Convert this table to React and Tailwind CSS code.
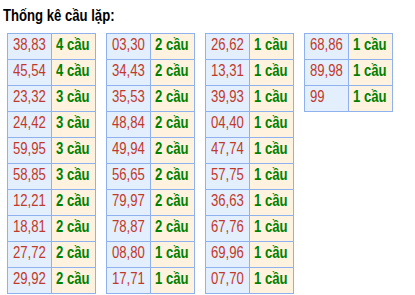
import React from "react";

const columns = [
	[["38,83", 4], ["45,54", 4], ["23,32", 3], ["24,42", 3], ["59,95", 3], ["58,85", 3], ["12,21", 2], ["18,81", 2], ["27,72", 2], ["29,92", 2]],
	[["03,30", 2], ["34,43", 2], ["35,53", 2], ["48,84", 2], ["49,94", 2], ["56,65", 2], ["79,97", 2], ["78,87", 2], ["08,80", 1], ["17,71", 1]],
	[["26,62", 1], ["13,31", 1], ["39,93", 1], ["04,40", 1], ["47,74", 1], ["57,75", 1], ["36,63", 1], ["67,76", 1], ["69,96", 1], ["07,70", 1]],
	[["68,86", 1], ["89,98", 1], ["99", 1]],
];

// chữ hẹp kiểu Arial Narrow: Liberation Sans bóp ngang
const narrow = "inline-block origin-left scale-x-[0.82] whitespace-nowrap";

function App() {
	return (
		<div className="w-[415px] h-[295px] bg-white overflow-hidden font-['Liberation_Sans',Arial,sans-serif] text-[16px]">
			<div className="pl-[3px] pt-[7px] h-[33px] font-bold text-black leading-[18px]">
				<span className={narrow}>Thống kê cầu lặp:</span>
			</div>
			<div className="flex items-start gap-[10px] pl-[7px]">
				{columns.map((rows, i) => (
					<table key={i} className="table-fixed w-[89px] border-collapse border border-[#8fb2ee]">
						<colgroup>
							<col className="w-[44px]" />
							<col className="w-[44px]" />
						</colgroup>
						<tbody>
							{rows.map(([pair, count], j) => (
								<tr key={j} className="h-[26px]">
									<td className="h-[26px] p-0 pl-[5px] pt-[2px] align-top overflow-visible border border-[#8fb2ee] bg-[#e4effd] text-[#c0392b] leading-[18px]">
										<span className={narrow}>{pair}</span>
									</td>
									<td className="h-[26px] p-0 pl-[4px] pt-[2px] align-top overflow-visible border border-[#8fb2ee] bg-[#fff3e0] text-[#008000] font-bold leading-[18px]">
										<span className={narrow}>{count} cầu</span>
									</td>
								</tr>
							))}
						</tbody>
					</table>
				))}
			</div>
		</div>
	);
}

export default App;
